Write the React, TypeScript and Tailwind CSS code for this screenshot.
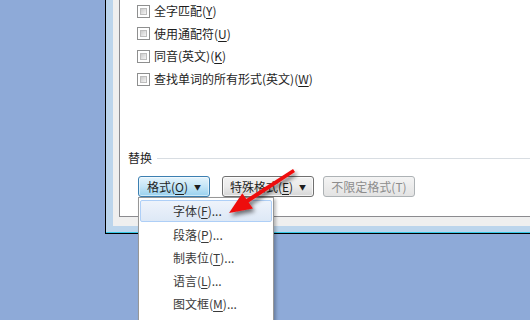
import React from 'react';

const font = { fontFamily: '"Microsoft YaHei", "Noto Sans CJK SC", "Noto Sans", sans-serif' };

// underlined access key inside a label
const Key = ({ k }: { k: string }) => <span className="underline underline-offset-2">{k}</span>;

const CheckRow = ({ label, k }: { label: string; k: string }) => (
  <div className="flex items-center h-[22.6px]">
    <div className="w-[13px] h-[13px] border border-[#8e8f8f] bg-white p-[2px]">
      <div className="w-full h-full bg-gradient-to-br from-[#cbcbcb] to-[#f4f4f4] border border-[#bdbdbd]" />
    </div>
    <span className="ml-[4px] text-[12px] text-[#1e1e1e]">
      {label}(<Key k={k} />)
    </span>
  </div>
);

const menuItems = [
  { label: '字体', k: 'F' },
  { label: '段落', k: 'P' },
  { label: '制表位', k: 'T' },
  { label: '语言', k: 'L' },
  { label: '图文框', k: 'M' },
];

export default function App() {
  return (
    <div className="relative w-[530px] h-[320px] overflow-hidden bg-[#8eaad8]" style={font}>
      {/* dialog window, its top and right run off the picture */}
      <div className="ml-[105px] w-[440px] h-[234px] border-l border-b border-black">
        <div className="h-full border-b border-[#36c8e6] bg-[#bcd5ec] pl-[7px] pb-[6px]">
          <div className="h-full bg-[#efefef] pl-[6px] pb-[9px]">
            <div className="h-full bg-white border-l border-b border-[#8b8b8f] flex flex-col">
              <div className="pl-[17px]">
                <CheckRow label="全字匹配" k="Y" />
                <CheckRow label="使用通配符" k="U" />
                <CheckRow label="同音(英文)" k="K" />
                <CheckRow label="查找单词的所有形式(英文)" k="W" />
              </div>

              <div className="mt-[59px] pl-[8px] flex items-center">
                <span className="text-[12px] text-[#1e1e1e]">替换</span>
                <div className="flex-1 ml-[5px] h-px bg-[#d8dde2]" />
              </div>

              <div className="mt-[9px] pl-[18px] flex items-center text-[12px]">
                <div className="w-[72px] h-[21px] rounded-[3px] border border-[#3c7fb1] bg-gradient-to-b from-[#e5f4fc] via-[#c4e5f6] to-[#98d1ef] flex items-center justify-center text-[#1e1e1e] shadow-[inset_0_0_0_1px_rgba(255,255,255,0.5)]">
                  格式(<Key k="O" />)
                  <span className="ml-[6px] text-[7px]">▼</span>
                </div>
                <div className="ml-[12px] w-[92px] h-[21px] rounded-[3px] border border-[#707070] bg-gradient-to-b from-[#f2f2f2] via-[#ebebeb] to-[#d6d6d6] flex items-center justify-center text-[#1e1e1e] shadow-[inset_0_0_0_1px_rgba(255,255,255,0.7)]">
                  特殊格式(<Key k="E" />)
                  <span className="ml-[6px] text-[7px]">▼</span>
                </div>
                <div className="ml-[9px] w-[92px] h-[21px] rounded-[3px] border border-[#adb2b5] bg-gradient-to-b from-[#f4f4f4] to-[#e3e3e3] flex items-center justify-center text-[#8d8d8d]">
                  不限定格式(T)
                </div>
              </div>
            </div>
          </div>
        </div>
      </div>

      {/* dropdown menu opened from 格式 */}
      <div className="absolute left-[138px] top-[197px] w-[136px] h-[140px] bg-white border border-[#979797] shadow-[2px_2px_3px_rgba(0,0,0,0.25)] pt-[2px] px-[1px]">
        {menuItems.map((it, i) => (
          <div
            key={it.label}
            className={
              i === 0
                ? 'h-[22px] mb-px rounded-[2px] border border-[#aecff7] bg-gradient-to-b from-[#eef3fb] to-[#dde8f6] flex items-center pl-[32px] text-[12px] text-[#333]'
                : 'h-[23px] flex items-center pl-[33px] text-[12px] text-[#3a3a3a]'
            }
          >
            {it.label}(<Key k={it.k} />)...
          </div>
        ))}
      </div>

      {/* red pointing arrow */}
      <svg className="absolute left-0 top-0 pointer-events-none" width="530" height="320">
        <defs>
          <filter id="sh" x="-50%" y="-50%" width="200%" height="200%">
            <feGaussianBlur in="SourceAlpha" stdDeviation="2" />
            <feOffset dx="2" dy="3" result="b" />
            <feComponentTransfer>
              <feFuncA type="linear" slope="0.55" />
            </feComponentTransfer>
            <feMerge>
              <feMergeNode />
              <feMergeNode in="SourceGraphic" />
            </feMerge>
          </filter>
        </defs>
        <polygon
          filter="url(#sh)"
          fill="#ee1111"
          points="229,213 253,208.5 248.6,202.4 295,172 293,169 246.3,199.1 242.3,193.2"
        />
      </svg>
    </div>
  );
}
